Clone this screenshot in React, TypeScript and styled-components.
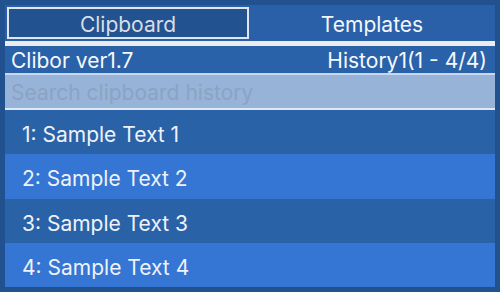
import React from 'react';
import styled, { createGlobalStyle } from 'styled-components';

const items = ['Sample Text 1', 'Sample Text 2', 'Sample Text 3', 'Sample Text 4'];

function App(): JSX.Element {
  return (
    <>
      <GlobalStyle />
      <Window>
        <Panel>
          <TabBar>
            <Tab active>Clipboard</Tab>
            <Tab>Templates</Tab>
          </TabBar>
          <Separator />
          <Header>
            <span>Clibor ver1.7</span>
            <span>History1(1 - 4/4)</span>
          </Header>
          <Search placeholder="Search clipboard history" />
          <List>
            {items.map((text, i) => (
              <Row key={text} alt={i % 2 === 1}>
                {i + 1}: {text}
              </Row>
            ))}
          </List>
        </Panel>
      </Window>
    </>
  );
}

const GlobalStyle = createGlobalStyle`
  html, body {
    margin: 0;
    background: #21518e;
  }
  * {
    box-sizing: border-box;
  }
`;

const Window = styled.div`
  width: 500px;
  height: 292px;
  padding: 5px;
  background: #21518e;
  font-family: Inter, 'Noto Sans', sans-serif;
`;

const Panel = styled.div`
  height: 282px;
  display: flex;
  flex-direction: column;
  background: #2a60a8;
`;

const TabBar = styled.div`
  display: flex;
  height: 36px;
  padding: 2px;
  gap: 2px;
`;

const Tab = styled.div<{ active?: boolean }>`
  flex: 1;
  display: flex;
  align-items: center;
  justify-content: center;
  padding-top: 2px;
  font-size: 21px;
  color: ${({ active }) => (active ? '#d9dee6' : '#f4f6fa')};
  background: ${({ active }) => (active ? '#22528f' : 'transparent')};
  border: 2px solid ${({ active }) => (active ? '#dfe6f0' : 'transparent')};
`;

const Separator = styled.div`
  height: 5px;
  background: #ececec;
`;

const Header = styled.div`
  height: 29px;
  display: flex;
  align-items: center;
  justify-content: space-between;
  padding: 2px 8px 0 6px;
  font-size: 21px;
  color: #f7f8fb;
  background: #2a62aa;
  border-bottom: 2px solid #c9d8ee;
`;

const Search = styled.input`
  height: 35px;
  border: none;
  border-bottom: 2px solid #dfe8f4;
  outline: none;
  padding: 2px 6px 0;
  font-family: inherit;
  font-size: 21px;
  background: #97b3d8;
  color: #fff;
  &::placeholder {
    color: #8ba3c3;
  }
`;

const List = styled.div`
  flex: 1;
  display: flex;
  flex-direction: column;
`;

const Row = styled.div<{ alt: boolean }>`
  flex: 1;
  display: flex;
  align-items: center;
  padding: 5px 0 0 17px;
  font-size: 21px;
  color: #eef2f8;
  background: ${({ alt }) => (alt ? '#3575d4' : '#2a62a8')};
`;

export default App;
